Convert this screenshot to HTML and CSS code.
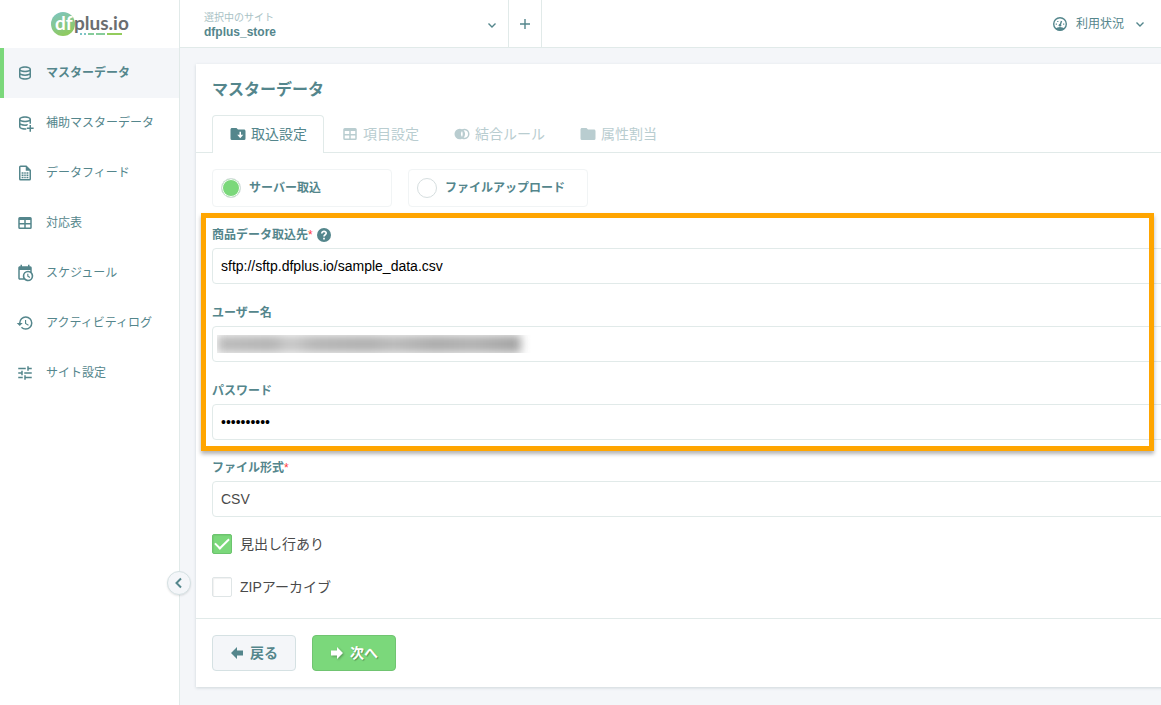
FILE: index.html
```html
<!DOCTYPE html>
<html lang="ja">
<head>
<meta charset="utf-8">
<meta name="viewport" content="width=device-width, initial-scale=1">
<title>マスターデータ | dfplus.io</title>
<link rel="stylesheet" href="styles.css">
</head>
<body>
<div class="app">
  <aside class="sidebar">
    <a class="logo" href="#" aria-label="dfplus.io">
      <svg width="80" height="30" viewBox="0 0 80 30">
        <defs>
          <linearGradient id="mark" x1="0" y1="0" x2="0.4" y2="1">
            <stop offset="0" stop-color="#7cc4c6"/>
            <stop offset="1" stop-color="#8fca62"/>
          </linearGradient>
        </defs>
        <circle cx="13" cy="15" r="12" fill="url(#mark)"/>
        <text class="logo-df" x="5" y="21">df</text>
        <text class="logo-plus" x="24" y="21">plus.io</text>
        <g stroke-width="2">
          <path d="M30 25h2M34 25h2" stroke="#7cc4c6"/>
          <path d="M38 25h6M46 25h9" stroke="#86cc9a"/>
          <path d="M57 25h15" stroke="#93cc5c"/>
        </g>
      </svg>
    </a>
    <nav class="menu">
      <a class="menu-item active" href="#">
        <svg class="icon" viewBox="0 0 24 24"><path d="M12 3C7.580 3 4 4.790 4 7V17C4 19.210 7.590 21 12 21S20 19.210 20 17V7C20 4.790 16.420 3 12 3M18 17C18 17.500 15.870 19 12 19S6 17.500 6 17V14.770C7.610 15.550 9.720 16 12 16S16.390 15.550 18 14.770V17M18 12.450C16.700 13.400 14.420 14 12 14C9.580 14 7.300 13.400 6 12.450V9.640C7.470 10.470 9.610 11 12 11C14.390 11 16.530 10.470 18 9.640V12.450M12 9C8.130 9 6 7.500 6 7S8.130 5 12 5C15.870 5 18 6.500 18 7S15.870 9 12 9Z"/></svg>
        <span>マスターデータ</span>
      </a>
      <a class="menu-item" href="#">
        <svg class="icon" viewBox="0 0 24 24"><path d="M12 3C7.580 3 4 4.790 4 7V17C4 19.210 7.590 21 12 21C12.600 21 13.200 20.970 13.700 20.900V18.880C13.200 18.960 12.600 19 12 19C8.130 19 6 17.500 6 17V14.770C7.610 15.550 9.720 16 12 16C13 16 14 15.900 15 15.700L16 13.400C14.800 13.800 13.400 14 12 14C9.580 14 7.300 13.400 6 12.450V9.640C7.470 10.470 9.610 11 12 11C14.390 11 16.530 10.470 18 9.640V13H20V7C20 4.790 16.420 3 12 3M12 9C8.130 9 6 7.500 6 7S8.130 5 12 5C15.870 5 18 6.500 18 7S15.870 9 12 9M18 14.500V18H14.500V20H18V23.500H20V20H23.500V18H20V14.500Z"/></svg>
        <span>補助マスターデータ</span>
      </a>
      <a class="menu-item" href="#">
        <svg class="icon" viewBox="0 0 24 24"><path fill-rule="evenodd" d="M6 2H14L20 8V20A2 2 0 0 1 18 22H6A2 2 0 0 1 4 20V4A2 2 0 0 1 6 2M6 4V20H18V9H13V4ZM7.500 11H10V13H7.500ZM11 11H13V13H11ZM14 11H16.500V13H14ZM7.500 14H10V16H7.500ZM11 14H13V16H11ZM14 14H16.500V16H14ZM7.500 17H10V19H7.500ZM11 17H13V19H11ZM14 17H16.500V19H14Z"/></svg>
        <span>データフィード</span>
      </a>
      <a class="menu-item" href="#">
        <svg class="icon" viewBox="0 0 24 24"><path fill-rule="evenodd" d="M5 4H19A2 2 0 0 1 21 6V18A2 2 0 0 1 19 20H5A2 2 0 0 1 3 18V6A2 2 0 0 1 5 4M5 8V12H11V8H5M13 8V12H19V8H13M5 14V18H11V14H5M13 14V18H19V14H13Z"/></svg>
        <span>対応表</span>
      </a>
      <a class="menu-item" href="#">
        <svg class="icon" viewBox="0 0 24 24"><path fill-rule="evenodd" d="M15 13H16.500V15.820L18.940 17.230L18.190 18.530L15 16.690V13M19 8H5V19H9.670C9.240 18.090 9 17.070 9 16A7 7 0 0 1 16 9C17.070 9 18.090 9.240 19 9.670V8M5 21C3.890 21 3 20.100 3 19V5C3 3.890 3.890 3 5 3H6V1H8V3H16V1H18V3H19A2 2 0 0 1 21 5V11.100C22.240 12.360 23 14.090 23 16A7 7 0 0 1 16 23C14.090 23 12.360 22.240 11.100 21H5M16 11.150A4.850 4.850 0 0 0 11.150 16C11.150 18.680 13.320 20.850 16 20.850A4.850 4.850 0 0 0 20.850 16C20.850 13.320 18.680 11.150 16 11.150Z"/></svg>
        <span>スケジュール</span>
      </a>
      <a class="menu-item" href="#">
        <svg class="icon" viewBox="0 0 24 24"><path d="M13.500 8H12V13L16.280 15.540L17 14.330L13.500 12.250V8M13 3A9 9 0 0 0 4 12H1L4.960 16.030L9 12H6A7 7 0 0 1 13 5A7 7 0 0 1 20 12A7 7 0 0 1 13 19C11.070 19 9.320 18.210 8.060 16.940L6.640 18.360C8.270 20 10.500 21 13 21A9 9 0 0 0 22 12A9 9 0 0 0 13 3"/></svg>
        <span>アクティビティログ</span>
      </a>
      <a class="menu-item" href="#">
        <svg class="icon" viewBox="0 0 24 24"><path d="M3 17V19H9V17H3M3 5V7H13V5H3M13 21V19H21V17H13V15H11V21H13M7 9V11H3V13H7V15H9V9H7M21 13V11H11V13H21M15 9H17V7H21V5H17V3H15V9Z"/></svg>
        <span>サイト設定</span>
      </a>
    </nav>
    <button class="collapse" type="button" aria-label="メニューを閉じる">
      <svg width="12" height="12" viewBox="0 0 12 12"><path class="line" d="M8 1.500L3.500 6L8 10.500"/></svg>
    </button>
  </aside>

  <div class="page">
    <header class="topbar">
      <button class="site-picker" type="button">
        <span class="site-text">
          <span class="site-caption">選択中のサイト</span>
          <span class="site-name">dfplus_store</span>
        </span>
        <svg class="chevron" viewBox="0 0 10 10"><path class="line-thin" d="M1.500 3.500L5 7L8.500 3.500"/></svg>
      </button>
      <button class="add-site" type="button" aria-label="サイトを追加">
        <svg width="12" height="12" viewBox="0 0 12 12"><path class="line-thin" d="M6 1v10M1 6h10"/></svg>
      </button>
      <button class="usage" type="button">
        <svg class="gauge" viewBox="0 0 16 16">
          <circle class="line-thin" cx="8" cy="8" r="6.300"/>
          <path d="M3 12.500Q8 9.500 13 12.500Q8 17 3 12.500Z"/>
          <circle cx="8" cy="9.200" r="1.300"/>
          <path class="line-thin" d="M8 9.500L9.500 5"/>
          <path d="M3.700 7.500h1.200v1.200H3.700ZM5.200 4.900h1.200v1.200H5.200ZM11.100 7.500h1.200v1.200H11.100Z"/>
        </svg>
        <span>利用状況</span>
        <svg class="chevron" viewBox="0 0 10 10"><path class="line-thin" d="M1.500 3.500L5 7L8.500 3.500"/></svg>
      </button>
    </header>

    <main class="content">
      <form class="card">
        <h1 class="title">マスターデータ</h1>
        <nav class="tabs">
          <a class="tab current" href="#">
            <svg class="icon" viewBox="0 0 24 24"><path fill-rule="evenodd" d="M10 4H4C2.890 4 2 4.890 2 6V18A2 2 0 0 0 4 20H20A2 2 0 0 0 22 18V8C22 6.890 21.100 6 20 6H12L10 4ZM14 9H16V13H19L15 17.500L11 13H14Z"/></svg>
            <span>取込設定</span>
          </a>
          <a class="tab" href="#">
            <svg class="icon" viewBox="0 0 24 24"><path fill-rule="evenodd" d="M5 4H19A2 2 0 0 1 21 6V18A2 2 0 0 1 19 20H5A2 2 0 0 1 3 18V6A2 2 0 0 1 5 4M5 8V12H11V8H5M13 8V12H19V8H13M5 14V18H11V14H5M13 14V18H19V14H13Z"/></svg>
            <span>項目設定</span>
          </a>
          <a class="tab" href="#">
            <svg class="icon" viewBox="0 0 24 24"><path fill-rule="evenodd" d="M9 5A7 7 0 0 0 9 19C10.040 19 11.060 18.760 12 18.320A7 7 0 1 0 12 5.680C11.060 5.240 10.040 5 9 5M15 7A5 5 0 0 1 15 17L14.100 16.900A7 7 0 0 0 14.100 7.100ZM12 8C10 10.300 10 13.700 12 16C13.300 13.700 13.300 10.300 12 8Z"/></svg>
            <span>結合ルール</span>
          </a>
          <a class="tab" href="#">
            <svg class="icon" viewBox="0 0 24 24"><path d="M10 4H4C2.890 4 2 4.890 2 6V18A2 2 0 0 0 4 20H20A2 2 0 0 0 22 18V8C22 6.890 21.100 6 20 6H12L10 4Z"/></svg>
            <span>属性割当</span>
          </a>
        </nav>

        <div class="body">
          <div class="choices">
            <label class="choice"><input class="radio" type="radio" name="source" checked>サーバー取込</label>
            <label class="choice"><input class="radio" type="radio" name="source">ファイルアップロード</label>
          </div>

          <div class="fields connection">
            <div class="field">
              <div class="label-row">
                <label for="url">商品データ取込先<span class="required">*</span></label>
                <svg class="help" viewBox="0 0 14 14" role="img" aria-label="ヘルプ">
                  <circle cx="7" cy="7" r="7"/>
                  <path class="help-mark" d="M4.800 5.400C4.800 2.500 9.300 2.700 9.200 5.300C9.100 6.800 7 6.700 7 8.500M7 9.800v1.700"/>
                </svg>
              </div>
              <input class="control" id="url" type="text" value="sftp://sftp.dfplus.io/sample_data.csv">
            </div>
            <div class="field">
              <div class="label-row"><label for="user">ユーザー名</label></div>
              <div class="masked">
                <input class="control" id="user" type="text">
                <span class="mask" aria-hidden="true"><span class="smudge"></span></span>
              </div>
            </div>
            <div class="field">
              <div class="label-row"><label for="pass">パスワード</label></div>
              <input class="control" id="pass" type="password" value="samplepass">
            </div>
            <div class="highlight" aria-hidden="true"></div>
          </div>

          <div class="field">
            <div class="label-row"><label for="format">ファイル形式<span class="required">*</span></label></div>
            <select class="control select" id="format"><option>CSV</option></select>
          </div>

          <div class="checks">
            <label class="check"><input class="checkbox" type="checkbox" checked>見出し行あり</label>
            <label class="check"><input class="checkbox" type="checkbox">ZIPアーカイブ</label>
          </div>
        </div>

        <footer class="actions">
          <button class="button" type="button">
            <svg width="14" height="14" viewBox="0 0 14 14"><path d="M1 7L7 1V4.500H13V9.500H7V13Z"/></svg>
            <span>戻る</span>
          </button>
          <button class="button primary" type="button">
            <svg width="14" height="14" viewBox="0 0 14 14"><path d="M13 7L7 1V4.500H1V9.500H7V13Z"/></svg>
            <span>次へ</span>
          </button>
        </footer>
      </form>
    </main>
  </div>
</div>
</body>
</html>
```
FILE: styles.css
```css
:root {
  --teal: #54868c;
  --muted: #b9cdd0;
  --line: #e1eae9;
  --green: #7bd87b;
  --canvas: #f4f6f9;
}

* {
  box-sizing: border-box;
}

body {
  margin: 0;
  background: var(--canvas);
  color: var(--teal);
  font-family: "Liberation Sans", "Noto Sans CJK JP", sans-serif;
  font-size: 12px;
  line-height: 20px;
}

button,
input,
select {
  font: inherit;
  color: inherit;
}

button {
  background: none;
  border: 0;
  padding: 0;
  cursor: pointer;
}

a {
  color: inherit;
  text-decoration: none;
}

svg {
  display: block;
  flex: none;
  fill: currentColor;
}

.line,
.line-thin {
  fill: none;
  stroke: currentColor;
  stroke-width: 2;
}

.line-thin {
  stroke-width: 1.4;
}

.icon {
  width: 18px;
  height: 18px;
}

.app {
  display: flex;
  min-height: 100vh;
}

/* Sidebar */
.sidebar {
  position: relative;
  flex: 0 0 180px;
  background: #fff;
  border-right: 1px solid var(--line);
}

.logo {
  display: flex;
  align-items: center;
  justify-content: center;
  height: 48px;
}

.logo-df,
.logo-plus {
  font-family: Lato, sans-serif;
  font-size: 19px;
  font-weight: 700;
  fill: #fff;
}

.logo-plus {
  fill: #6b6e70;
}

.menu-item {
  display: flex;
  align-items: center;
  gap: 12px;
  height: 50px;
  padding-left: 12px;
  border-left: 4px solid transparent;
}

.menu-item.active {
  background: var(--canvas);
  border-left-color: var(--green);
  font-weight: 700;
}

.collapse {
  position: absolute;
  right: -12px;
  bottom: 110px;
  z-index: 1;
  display: flex;
  align-items: center;
  justify-content: center;
  width: 24px;
  height: 24px;
  background: var(--canvas);
  border: 1px solid #d5e1e3;
  border-radius: 50%;
  box-shadow: 0 1px 2px rgba(0, 0, 0, 0.1);
}

/* Top bar */
.page {
  flex: 1;
  min-width: 0;
  overflow: hidden;
}

.topbar {
  display: flex;
  height: 48px;
  background: #fff;
  border-bottom: 1px solid var(--line);
}

.site-picker {
  display: flex;
  align-items: center;
  justify-content: space-between;
  width: 329px;
  padding: 2px 11px 0 24px;
  border-right: 1px solid var(--line);
  text-align: left;
}

.site-text {
  display: flex;
  flex-direction: column;
}

.site-caption {
  color: #a9c2c5;
  font-size: 10px;
  line-height: 14px;
}

.site-name {
  font-weight: 700;
  line-height: 14px;
}

.chevron {
  width: 10px;
  height: 10px;
}

.add-site {
  display: flex;
  align-items: center;
  justify-content: center;
  width: 33px;
  border-right: 1px solid var(--line);
}

.usage {
  display: flex;
  align-items: center;
  gap: 8px;
  margin-left: auto;
  padding-right: 16px;
}

.usage .chevron {
  margin-left: 3px;
}

.gauge {
  width: 16px;
  height: 16px;
}

/* Card */
.content {
  padding: 16px 0 18px 16px;
}

.card {
  margin-right: -24px;
  background: #fff;
  box-shadow: 0 1px 3px rgba(60, 90, 100, 0.2);
}

.title {
  margin: 0;
  padding: 14px 16px 13px;
  font-size: 16px;
  line-height: 24px;
}

.tabs {
  display: flex;
  padding: 0 16px;
  border-bottom: 1px solid var(--line);
}

.tab {
  display: flex;
  align-items: center;
  gap: 4px;
  height: 38px;
  margin-bottom: -1px;
  padding: 0 16px 2px;
  border: 1px solid transparent;
  border-bottom: 0;
  border-radius: 4px 4px 0 0;
  color: var(--muted);
  font-size: 14px;
}

.tab.current {
  background: #fff;
  border-color: var(--line);
  color: var(--teal);
}

.body {
  padding: 16px 16px 21px;
}

.choices {
  display: flex;
  gap: 16px;
}

.choice {
  display: flex;
  align-items: center;
  gap: 8px;
  width: 180px;
  height: 38px;
  padding: 0 8px;
  border: 1px solid #f1f4f5;
  border-radius: 4px;
  font-weight: 700;
}

.radio {
  appearance: none;
  flex: none;
  width: 20px;
  height: 20px;
  margin: 0;
  background: #fff;
  border: 1px solid #d6dedf;
  border-radius: 50%;
}

.radio:checked {
  background: var(--green);
  box-shadow: inset 0 0 0 1px #fff;
}

.fields {
  position: relative;
  display: grid;
  gap: 18px;
  margin: 17px 0;
}

.label-row {
  display: flex;
  align-items: center;
  gap: 4px;
  height: 20px;
  margin-bottom: 4px;
  padding-top: 2px;
  font-weight: 700;
}

.required {
  color: #ff3b3b;
  font-weight: 400;
}

.help {
  width: 14px;
  height: 14px;
}

.help-mark {
  fill: none;
  stroke: #fff;
  stroke-width: 1.7;
}

.control {
  display: block;
  width: 100%;
  height: 36px;
  padding: 0 8px;
  background: #fff;
  border: 1px solid var(--line);
  border-radius: 4px;
  color: #000;
  font-size: 14px;
}

.select {
  appearance: none;
  color: #4a4a4a;
}

.masked {
  position: relative;
}

.mask {
  position: absolute;
  top: 9px;
  left: 5px;
  width: 340px;
  height: 18px;
  overflow: hidden;
}

.smudge {
  display: block;
  width: 304px;
  height: 18px;
  background: linear-gradient(90deg, #bcbcbc, #b4b4b4 18%, #cacaca 24%, #b6b6b6 32%, #b0b0b0 50%, #bababa 58%, #ababab 72%, #b2b2b2 84%, #a2a2a2);
  filter: blur(5px);
}

.highlight {
  position: absolute;
  inset: -11px 15px -11px -11px;
  border: 5px solid #ffa500;
  box-shadow: 0 3px 4px rgba(0, 0, 0, 0.3);
  pointer-events: none;
}

.checks {
  display: grid;
  gap: 23px;
  margin-top: 17px;
}

.check {
  display: flex;
  align-items: center;
  gap: 8px;
  color: #4a4a4a;
  font-size: 14px;
}

.checkbox {
  appearance: none;
  display: grid;
  place-items: center;
  width: 20px;
  height: 20px;
  margin: 0;
  background: #fff;
  border: 1px solid #dfe5e6;
  border-radius: 2px;
  box-shadow: inset 1px 1px 1px rgba(0, 0, 0, 0.06);
}

.checkbox:checked {
  background: var(--green);
  border-color: #6cc46e;
}

.checkbox:checked::before {
  content: "";
  width: 12px;
  height: 6px;
  margin-bottom: 4px;
  border: solid #fff;
  border-width: 0 0 2px 2px;
  rotate: -45deg;
}

.actions {
  display: flex;
  gap: 16px;
  padding: 16px;
  border-top: 1px solid var(--line);
}

.button {
  display: flex;
  align-items: center;
  justify-content: center;
  gap: 6px;
  width: 84px;
  height: 36px;
  background: var(--canvas);
  border: 1px solid #d5e1e3;
  border-radius: 4px;
  font-size: 14px;
  font-weight: 700;
}

.primary {
  background: var(--green);
  border-color: #70c471;
  color: #fff;
  text-shadow: 1px 1px 1px rgba(0, 0, 0, 0.3);
}

.primary svg {
  filter: drop-shadow(1px 1px 1px rgba(0, 0, 0, 0.3));
}
```
